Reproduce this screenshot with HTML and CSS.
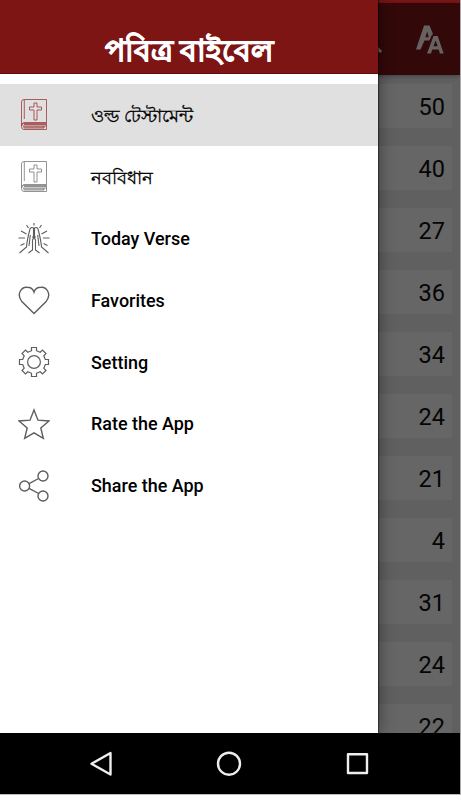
FILE: index.html
```html
<!DOCTYPE html>
<html lang="bn">
<head>
<meta charset="utf-8">
<title>পবিত্র বাইবেল</title>
<link rel="stylesheet" href="styles.css">
</head>
<body>
<div class="device">
  <div class="screen">
    <div class="status"></div>
    <header class="appbar">
      <svg class="search" width="10" height="14" viewBox="0 0 10 14"><path d="M0 3 8 11" stroke="#666" stroke-width="3"/></svg>
      <svg class="textsize" width="28" height="30" viewBox="0 0 28 30" fill="#666262" fill-rule="evenodd"><path d="M0 24.5 8 .5H13.5L17.2 9.5H16L13.5 15.5H8.5L4.5 24.5ZM9.4 12.3H12.8L11.2 6.5Z"/><path d="M11 28.5 17.5 11H21.7L27.7 28.5H23.9L22.7 24.5H16.4L14.9 28.5ZM17.5 21.3H21.7L19.6 15.5Z"/></svg>
    </header>
    <main class="books">
      <div class="book">50</div><div class="book">40</div><div class="book">27</div><div class="book">36</div><div class="book">34</div><div class="book">24</div><div class="book">21</div><div class="book">4</div><div class="book">31</div><div class="book">24</div><div class="book">22</div>
    </main>
    <aside class="drawer">
      <div class="title">পবিত্র বাইবেল</div>
      <nav class="menu">
        <a class="item active"><svg class="icon bible" viewBox="0 0 32 34"><use href="#bible"/></svg><span class="bn wide">ওল্ড টেস্টামেন্ট</span></a>
        <a class="item"><svg class="icon bible" viewBox="0 0 32 34"><g id="bible"><path d="M6 1.5H28.5V24.5H6Q3.5 25 3.5 28V4Q3.5 1.5 6 1.5ZM6.3 2V21"/><path d="M28.5 24.5V31.5H6Q3.5 31.5 3.5 28.5T6 25M6 26.5H28M5 28H26V30H6M26 28H28.5M5 29H26M6 25.5H28"/><path d="M16 5H19V9H23.5V12H19V22H16V12H11.5V9H16Z"/></g></svg><span class="bn">নববিধান</span></a>
        <a class="item"><svg class="icon thin" viewBox="0 0 32 34"><path d="M1.5 32 8.5 26Q9 19 12 8Q13.5 5.5 15.5 7V17L14.5 19V29L10.5 32M30.5 32 23.5 26Q23 19 20 8Q18.5 5.5 16.5 7V17L17.5 19V29L21.5 32M11 25 12.3 14M14 16H18M21 25 19.7 14"/><path d="M16 2V4.5M8.5 4 10.5 7M23.5 4 21.5 7M3 10 8.5 13M29 10 23.5 13M.5 17H7M31.5 17H25M2.5 24.5 6.5 22.5M29.5 24.5 25.5 22.5"/></svg><span>Today Verse</span></a>
        <a class="item"><svg class="icon" viewBox="0 0 32 34"><path d="M16 30.5 3.6 18.2C-2 10.8 3.8 3.8 9 4.3C12.8 4.3 15.2 6.6 16 9.1C16.8 6.6 19.2 4.3 23 4.3C28.2 3.8 34 10.8 28.4 18.2Z"/></svg><span>Favorites</span></a>
        <a class="item"><svg class="icon gear" viewBox="0 0 32 34"><circle cx="16" cy="17" r="6.4"/><path d="M13.5 2.5H18.5V5.7L22.2 7.2 24.5 5 28 8.5 25.8 10.8 27.3 14.5H30.5V19.5H27.3L25.8 23.2 28 25.5 24.5 29 22.2 26.8 18.5 28.3V31.5H13.5V28.3L9.8 26.8 7.5 29 4 25.5 6.2 23.2 4.7 19.5H1.5V14.5H4.7L6.2 10.8 4 8.5 7.5 5 9.8 7.2 13.5 5.7Z"/></svg><span>Setting</span></a>
        <a class="item"><svg class="icon" viewBox="0 0 32 34"><path d="M16 3 20 13.2 31 14 22.8 21 25.3 31.3 16 25.8 6.7 31.3 9.2 21 1 14 12 13.2Z"/></svg><span>Rate the App</span></a>
        <a class="item"><svg class="icon" viewBox="0 0 32 34"><circle cx="6.6" cy="17" r="5"/><circle cx="25" cy="7" r="5"/><circle cx="25" cy="27" r="5"/><path d="M11 14.7 20.6 9.5M11 19.3 20.6 24.5"/></svg><span>Share the App</span></a>
      </nav>
    </aside>
  </div>
  <footer class="navbar">
    <svg width="26" height="26" viewBox="0 0 26 26"><path d="M22.5 2V23.5L3.5 12.8Z"/></svg>
    <svg width="26" height="26" viewBox="0 0 26 26"><circle cx="13" cy="12.7" r="11"/></svg>
    <svg width="26" height="26" viewBox="0 0 26 26"><rect x="4" y="3.3" width="19" height="18.7"/></svg>
  </footer>
</div>
</body>
</html>
```
FILE: styles.css
```css
* { box-sizing: border-box; }
body { margin: 0; background: #fff; font-family: Roboto, "Noto Sans", sans-serif; }
.device { width: 461px; height: 795px; border-right: 1px solid #aaa; border-bottom: 1px solid #bbb; }
.screen { position: relative; height: 733px; overflow: hidden; background: #606060; }
.status { height: 3px; background: #7e1515; }
.appbar { height: 72px; padding: 20px 16px 0 373px; display: flex; justify-content: space-between; background: #330809; box-shadow: 0 1px 5px rgba(0,0,0,.35); }
.search { margin-top: 18px; }
.textsize { margin-top: 2px; }
.books { padding: 9px 8px 0 0; display: flex; flex-direction: column; gap: 18px; }
.book { flex: none; height: 44px; padding-right: 7px; background: #666; color: #050505; font-size: 23.5px; line-height: 47px; text-align: right; }
.drawer { position: absolute; left: 0; top: 0; width: 378px; height: 733px; background: #fff; box-shadow: 0 0 16px rgba(0,0,0,.45), 1px 0 1px rgba(0,0,0,.4); }
.title { height: 74px; padding-top: 33px; background: #7e1515; color: #fff; font-size: 30.3px; line-height: 36px; font-weight: 700; text-align: center; white-space: nowrap; border-bottom: 1px solid #650c0c; -webkit-text-stroke: .8px #fff; }
.menu { padding-top: 10px; }
.item { display: flex; align-items: center; height: 61.8px; padding-left: 18px; gap: 41px; color: #000; font-size: 17.95px; font-weight: 500; white-space: nowrap; }
.active { background: #e0e0e0; }
.icon { width: 32px; height: 34px; fill: none; stroke: #5d5d5d; stroke-width: 1.4; }
.thin { stroke-width: 1.1; }
.gear { stroke-width: 1.2; }
.bible { stroke: #777; stroke-width: .8; }
.active .bible { stroke: #9a3b3b; }
.bn { font-size: 18.4px; font-weight: 400; padding-top: 5px; -webkit-text-stroke: .3px #000; }
.wide { font-size: 18.2px; }
.navbar { height: 61px; padding: 18px 90px 0 88px; display: flex; justify-content: space-between; background: #000; }
.navbar svg { fill: none; stroke: #eee; stroke-width: 2.4; stroke-linejoin: round; }
```
